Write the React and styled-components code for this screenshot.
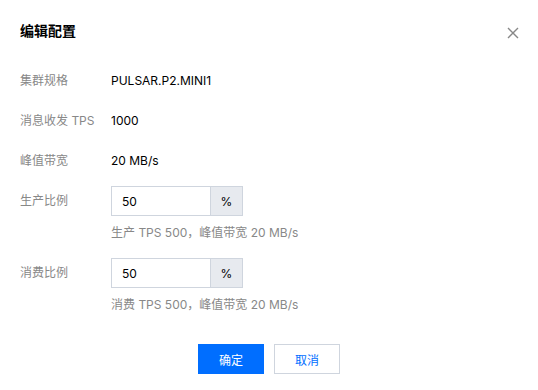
import styled, { createGlobalStyle } from "styled-components";

const GlobalStyle = createGlobalStyle`
  html, body {
    margin: 0;
    padding: 0;
    background: #fff;
  }
  body {
    font-family: "Inter", "Noto Sans CJK SC", sans-serif;
    font-size: 12px;
    color: rgba(0, 0, 0, 0.9);
  }
`;

const Dialog = styled.div`
  width: 538px;
  height: 390px;
  box-sizing: border-box;
  padding: 20px;
  display: flex;
  flex-direction: column;
`;

const Header = styled.div`
  display: flex;
  align-items: center;
  justify-content: space-between;
  height: 22px;
`;

const Title = styled.h3`
  margin: 0;
  font-size: 14px;
  font-weight: 700;
  line-height: 22px;
  color: #000;
`;

const CloseBtn = styled.button`
  border: 0;
  background: none;
  padding: 0;
  width: 12px;
  height: 12px;
  margin-top: 3px;
  margin-right: -1px;
  display: flex;
  cursor: pointer;
`;

const Form = styled.div`
  display: flex;
  flex-direction: column;
  margin-top: 24px;
`;

const Row = styled.div`
  display: flex;
  align-items: flex-start;
  margin-bottom: ${(p) => p.$gap ?? 10}px;
`;

const Label = styled.div`
  width: 91px;
  flex-shrink: 0;
  line-height: 30px;
  color: #888;
`;

const Value = styled.div`
  line-height: 30px;
  color: #000;
`;

const Field = styled.div`
  display: flex;
  flex-direction: column;
`;

const InputGroup = styled.div`
  display: flex;
  height: 30px;
  box-sizing: border-box;
  border: 1px solid #cfd5de;
  width: 132px;
`;

const Input = styled.input`
  border: 0;
  outline: none;
  width: 98px;
  box-sizing: border-box;
  padding: 0 10px;
  font: inherit;
  font-size: 12px;
  color: #000;
  background: #fff;
`;

const Suffix = styled.span`
  flex: 1;
  display: flex;
  align-items: center;
  justify-content: center;
  background: #e7eaef;
  border-left: 1px solid #cfd5de;
  color: #000;
`;

const Hint = styled.div`
  margin-top: 8px;
  line-height: 18px;
  color: #888;
`;

const Footer = styled.div`
  display: flex;
  justify-content: center;
  gap: 10px;
  margin-top: 30px;
`;

const Button = styled.button`
  width: 66px;
  height: 30px;
  box-sizing: border-box;
  font: inherit;
  font-size: 12px;
  cursor: pointer;
  border: 1px solid ${(p) => (p.$primary ? "#006eff" : "#cfd5de")};
  background: ${(p) => (p.$primary ? "#006eff" : "#fff")};
  color: ${(p) => (p.$primary ? "#fff" : "#006eff")};
`;

function RatioField({ label, value, hint, gap }) {
  return (
    <Row $gap={gap}>
      <Label>{label}</Label>
      <Field>
        <InputGroup>
          <Input defaultValue={value} />
          <Suffix>%</Suffix>
        </InputGroup>
        <Hint>{hint}</Hint>
      </Field>
    </Row>
  );
}

export default function App() {
  return (
    <>
      <GlobalStyle />
      <Dialog>
        <Header>
          <Title>编辑配置</Title>
          <CloseBtn aria-label="关闭">
            <svg width="12" height="12" viewBox="0 0 12 12">
              <path d="M1 1 L11 11 M11 1 L1 11" stroke="#888" strokeWidth="1.4" />
            </svg>
          </CloseBtn>
        </Header>
        <Form>
          <Row>
            <Label>集群规格</Label>
            <Value>PULSAR.P2.MINI1</Value>
          </Row>
          <Row>
            <Label>消息收发 TPS</Label>
            <Value>1000</Value>
          </Row>
          <Row>
            <Label>峰值带宽</Label>
            <Value>20 MB/s</Value>
          </Row>
          <RatioField label="生产比例" value="50" hint="生产 TPS 500，峰值带宽 20 MB/s" gap={16} />
          <RatioField label="消费比例" value="50" hint="消费 TPS 500，峰值带宽 20 MB/s" gap={0} />
        </Form>
        <Footer>
          <Button $primary>确定</Button>
          <Button>取消</Button>
        </Footer>
      </Dialog>
    </>
  );
}
